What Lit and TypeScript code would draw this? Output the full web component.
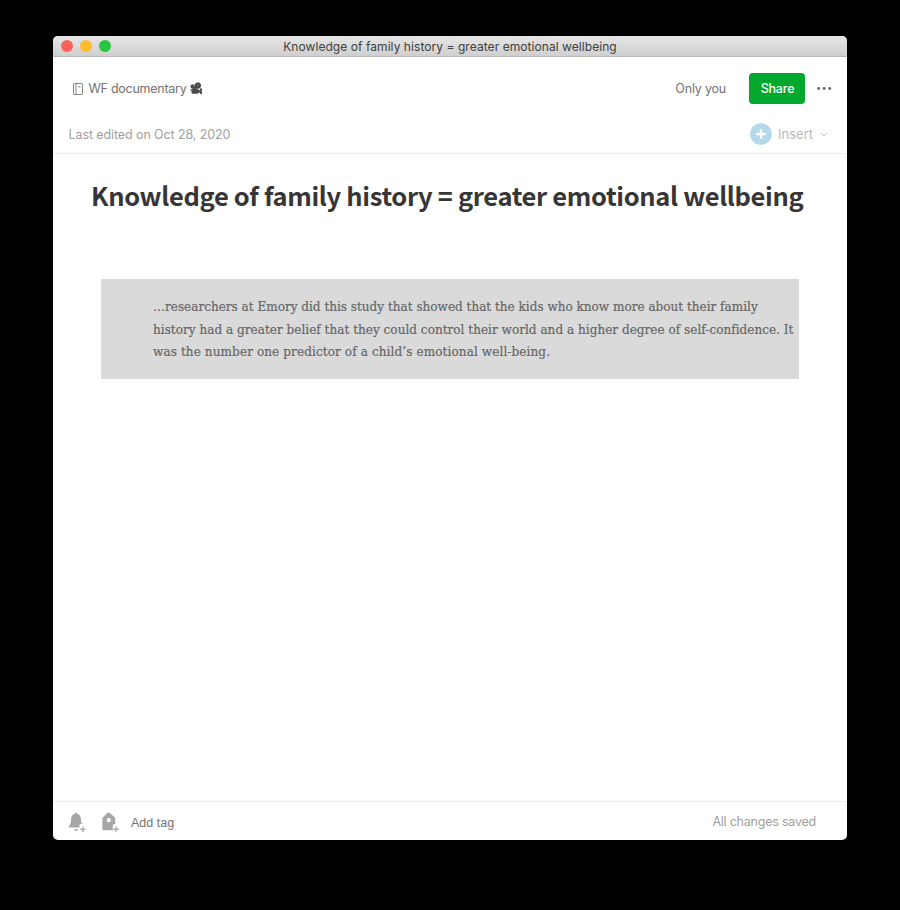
import { LitElement, html, css } from "lit";
import { customElement } from "lit/decorators.js";

const TITLE = "Knowledge of family history = greater emotional wellbeing";

const notebookIcon = html`<svg width="11" height="12" viewBox="0 0 11 12" fill="none" stroke="#777">
  <rect x="1.500" y=".5" width="9" height="11" rx=".6" stroke-width=".9" />
  <path d="M4 .5v11M6 3.900h2.700" stroke-width=".85" />
</svg>`;

const dotsIcon = html`<svg width="15" height="4" viewBox="0 0 15 4" fill="#666">
  <circle cx="1.6" cy="1.5" r="1.4" /><circle cx="7.2" cy="1.5" r="1.4" /><circle cx="12.8" cy="1.5" r="1.4" />
</svg>`;

const insertIcon = html`<svg width="22" height="22" viewBox="0 0 22 22">
  <circle cx="11" cy="11" r="10.8" fill="#b3d9ea" />
  <path d="M11 7.200v7.600M7.200 11h7.600" stroke="#fff" stroke-width="2.300" stroke-linecap="round" />
</svg>`;

const chevronIcon = html`<svg width="8" height="6" viewBox="0 0 8 6" fill="none" stroke="#b8b8b8" stroke-width="1">
  <path d="M1.2 2.100 4 4.800l2.800-2.700" stroke-linecap="round" />
</svg>`;

const plus = "M15 14.600v5.400M12.300 17.300h5.400";

const bellIcon = html`<svg width="19" height="20" viewBox="0 0 19 20" fill="#a6a6a6">
  <path d="M8 .7c.8 0 1.2.5 1.3 1.1 2.4.7 3.600 2.600 3.600 5.100 0 2.700.3 3.700 1.300 4.900l.2.300h-1.500c-.9 0-1.500.7-1.500 1.600v1.800H1.500c-.7 0-1-.6-.6-1.200 1.300-1.700 2.200-3.100 2.200-7.400 0-2.500 1.200-4.400 3.600-5.100C6.800 1.200 7.200.7 8 .7z" />
  <path d="M5.900 17.300h4.200c-.2 1-1 1.700-2.100 1.700s-1.900-.7-2.100-1.700z" />
  <path d=${plus} stroke="#fff" stroke-width="3.400" />
  <path d=${plus} stroke="#a6a6a6" stroke-width="1.300" />
</svg>`;

const tagIcon = html`<svg width="19" height="20" viewBox="0 0 19 20" fill="#a6a6a6">
  <path fill-rule="evenodd" d="M6.700.8a1.500 1.500 0 0 1 1.900 0l5 4.500c.4.400.6.8.6 1.300v5.600h-.9c-.9 0-1.500.6-1.500 1.500v4.600H2.600c-.7 0-1.200-.5-1.200-1.200V6.600c0-.5.2-1 .6-1.300zM7.700 6.100a2.100 2.100 0 1 0 0 4.200 2.100 2.100 0 0 0 0-4.200z" />
  <path d=${plus} stroke="#fff" stroke-width="3.400" />
  <path d=${plus} stroke="#a6a6a6" stroke-width="1.300" />
</svg>`;

@customElement("app-root")
class AppRoot extends LitElement {
  static styles = css`
    :host {
      display: block; box-sizing: border-box; width: 900px; height: 910px;
      padding: 36px 53px 70px; background: #000; color: #737373;
      font: 12.5px/16px Inter, "Liberation Sans", sans-serif; white-space: nowrap;
    }
    * { box-sizing: border-box; }
    svg { display: block; flex: none; }
    .window { display: flex; flex-direction: column; height: 804px; background: #fff; border-radius: 5px; overflow: hidden; }
    .titlebar {
      display: grid; grid-template-columns: 1fr auto 1fr; align-items: center; height: 21px; padding: 0 7.5px;
      background: linear-gradient(#e6e6e6, #cfcfcf); border-bottom: 1px solid #b9b9b9;
      color: #404040; font-size: 12px; letter-spacing: 0.06px;
    }
    .title { padding-top: 2px; }
    .lights { display: flex; gap: 7px; }
    .light { width: 12px; height: 12px; border-radius: 50%; }
    .red { background: #fc605b; }
    .yellow { background: #fdbc2e; }
    .green { background: #27c840; }
    .row { display: flex; align-items: center; justify-content: space-between; flex: none; }
    .group { display: flex; align-items: center; }
    .head { height: 63px; padding: 0 15px 0 19px; }
    .notebook { gap: 5.5px; letter-spacing: -0.26px; }
    .emoji { margin-left: -1.5px; font-size: 10.8px; letter-spacing: 0; transform: scaleX(-1); }
    .only { letter-spacing: -0.2px; }
    .share {
      display: grid; place-items: center; width: 56px; height: 31px; margin: 0 12px 0 23px; padding: 1px 0 0 1px;
      border: 0; border-radius: 4px; background: #00a82d; color: #fff; font: inherit; font-weight: 500; letter-spacing: -0.2px;
    }
    .sub { height: 34px; padding: 0 19px 5px 15.5px; border-bottom: 1px solid #ececec; color: #a0a0a0; }
    .edited { padding-top: 2px; letter-spacing: -0.1px; }
    .insert { color: #b8b8b8; font-size: 13px; }
    .insert span { margin: 0 7px 0 6px; }
    .note { flex: 1; padding: 0 38px; }
    h1 { margin: 18px 0 0; font: bold 25.5px/46px "Noto Sans CJK SC", "Noto Sans", sans-serif; letter-spacing: -0.34px; color: #363636; }
    .quote {
      margin: 61px 10px 0; height: 100px; padding: 17px 0 0 52px; background: #dadada;
      color: #666; font: 13.4px/22.5px "DejaVu Serif Condensed", "DejaVu Serif", serif;
      -webkit-text-stroke: 0.2px #666;
    }
    .line2 { letter-spacing: 0.02px; }
    .line3 { letter-spacing: 0.1px; }
    .foot { height: 39px; padding: 1px 31px 0 15px; border-top: 1px solid #ececec; }
    .tools { gap: 14px; }
    .add { margin-left: -3px; padding-top: 2px; font-family: "Liberation Sans", sans-serif; }
    .saved { padding-top: 1px; color: #a0a0a0; letter-spacing: -0.22px; }
  `;

  render() {
    return html`<main class="window">
      <header class="titlebar">
        <div class="lights"><i class="light red"></i><i class="light yellow"></i><i class="light green"></i></div>
        <span class="title">${TITLE}</span><span></span>
      </header>
      <div class="row head">
        <div class="group notebook">${notebookIcon}<span>WF documentary</span><span class="emoji">🎥</span></div>
        <div class="group"><span class="only">Only you</span><button class="share">Share</button>${dotsIcon}</div>
      </div>
      <div class="row sub">
        <span class="edited">Last edited on Oct 28, 2020</span>
        <div class="group insert">${insertIcon}<span>Insert</span>${chevronIcon}</div>
      </div>
      <section class="note">
        <h1>${TITLE}</h1>
        <div class="quote">
          <div>…researchers at Emory did this study that showed that the kids who know more about their family</div>
          <div class="line2">history had a greater belief that they could control their world and a higher degree of self-confidence. It</div>
          <div class="line3">was the number one predictor of a child’s emotional well-being.</div>
        </div>
      </section>
      <footer class="row foot">
        <div class="group tools">${bellIcon}${tagIcon}<span class="add">Add tag</span></div>
        <span class="saved">All changes saved</span>
      </footer>
    </main>`;
  }
}
